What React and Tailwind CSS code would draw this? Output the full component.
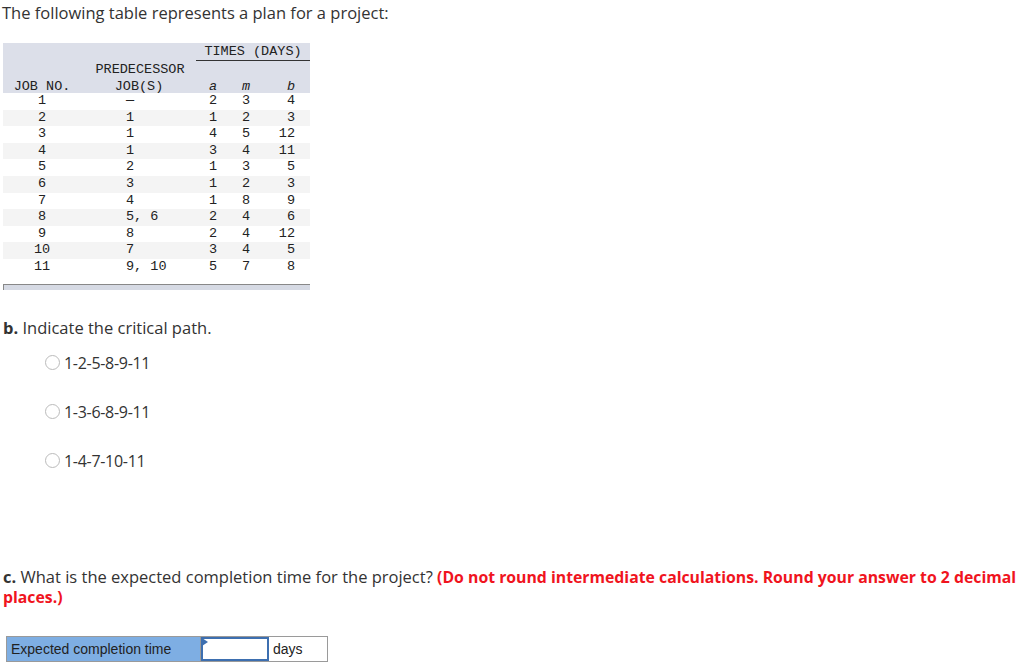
import React from 'react';

const rows = [
  ['1', '—', '2', '3', '4'],
  ['2', '1', '1', '2', '3'],
  ['3', '1', '4', '5', '12'],
  ['4', '1', '3', '4', '11'],
  ['5', '2', '1', '3', '5'],
  ['6', '3', '1', '2', '3'],
  ['7', '4', '1', '8', '9'],
  ['8', '5, 6', '2', '4', '6'],
  ['9', '8', '2', '4', '12'],
  ['10', '7', '3', '4', '5'],
  ['11', '9, 10', '5', '7', '8'],
];

const paths = ['1-2-5-8-9-11', '1-3-6-8-9-11', '1-4-7-10-11'];

const App = () => {
  return (
    <div className="w-[1024px] h-[668px] bg-white text-[#333] overflow-hidden" style={{ fontFamily: '"Open Sans", Lato, sans-serif' }}>
      <p className="pl-[2px] pt-[2px] text-[16.5px] leading-[22px]">The following table represents a plan for a project:</p>

      {/* plan table */}
      <div className="ml-[3px] mt-[19px] w-[307px] text-[13.5px] text-[#222]" style={{ fontFamily: '"Liberation Mono", monospace' }}>
        <div className="bg-[#dcdfe9] h-[50px] relative">
          <div className="absolute left-[193px] top-[1px] w-[114px] text-center leading-[16px] border-b border-[#333]">TIMES (DAYS)</div>
          <div className="absolute left-[80px] top-[19px] w-[114px] text-center leading-[16px]">PREDECESSOR</div>
          <div className="absolute top-[36px] left-0 right-0 flex leading-[16px]">
            <div className="w-[78px] text-center">JOB NO.</div>
            <div className="w-[116px] text-center">JOB(S)</div>
            <div className="w-[32px] text-center italic">a</div>
            <div className="w-[34px] text-center italic">m</div>
            <div className="w-[47px] text-right pr-[15px] italic">b</div>
          </div>
        </div>
        {rows.map((r, i) => (
          <div key={i} className={`flex h-[16.6px] leading-[16.6px] ${i % 2 === 1 ? 'bg-[#f4f4f4]' : 'bg-white'}`}>
            <div className="w-[78px] text-center">{r[0]}</div>
            <div className="w-[116px] pl-[45px]">{r[1]}</div>
            <div className="w-[32px] text-center">{r[2]}</div>
            <div className="w-[34px] text-center">{r[3]}</div>
            <div className="w-[47px] text-right pr-[15px]">{r[4]}</div>
          </div>
        ))}
        <div className="mt-[8px] h-[6px] bg-[#d6dae4] border-l border-t border-[#888]"></div>
      </div>

      {/* part b */}
      <p className="pl-[3px] mt-[27px] text-[16.5px] leading-[22px]"><b>b.</b> Indicate the critical path.</p>
      <div className="mt-[13px] flex flex-col gap-[27px]">
        {paths.map((p) => (
          <label key={p} className="flex items-center pl-[45px] text-[16px] leading-[22px] tracking-[-0.3px]">
            <span className="w-[15px] h-[15px] rounded-full border border-[#bbb] bg-white mr-[4px]"></span>
            {p}
          </label>
        ))}
      </div>

      {/* part c */}
      <p className="pl-[3px] mt-[95px] text-[16.5px] leading-[20px] w-[1040px]">
        <b>c.</b> What is the expected completion time for the project?{' '}
        <b className="text-[#f0141e] text-[15.8px]">(Do not round intermediate calculations. Round your answer to 2 decimal places.)</b>
      </p>
      <div className="ml-[6px] mt-[29px] flex w-[322px] h-[26px] border border-[#9a9a9a] text-[14px]" style={{ fontFamily: '"Liberation Sans", Arial, sans-serif' }}>
        <div className="w-[194px] bg-[#7eaee3] pl-[4px] leading-[24px] text-[#222] border-r border-[#9a9a9a]">Expected completion time</div>
        <div className="relative w-[68px] border-2 border-[#3d6fb0] bg-white">
          <span className="absolute -left-[1px] -top-[1px] w-0 h-0 border-t-[4px] border-b-[4px] border-l-[6px] border-t-transparent border-b-transparent border-l-[#3d6fb0]"></span>
        </div>
        <div className="flex-1 pl-[4px] leading-[24px] text-[#222] bg-white">days</div>
      </div>
    </div>
  );
};

export default App;
